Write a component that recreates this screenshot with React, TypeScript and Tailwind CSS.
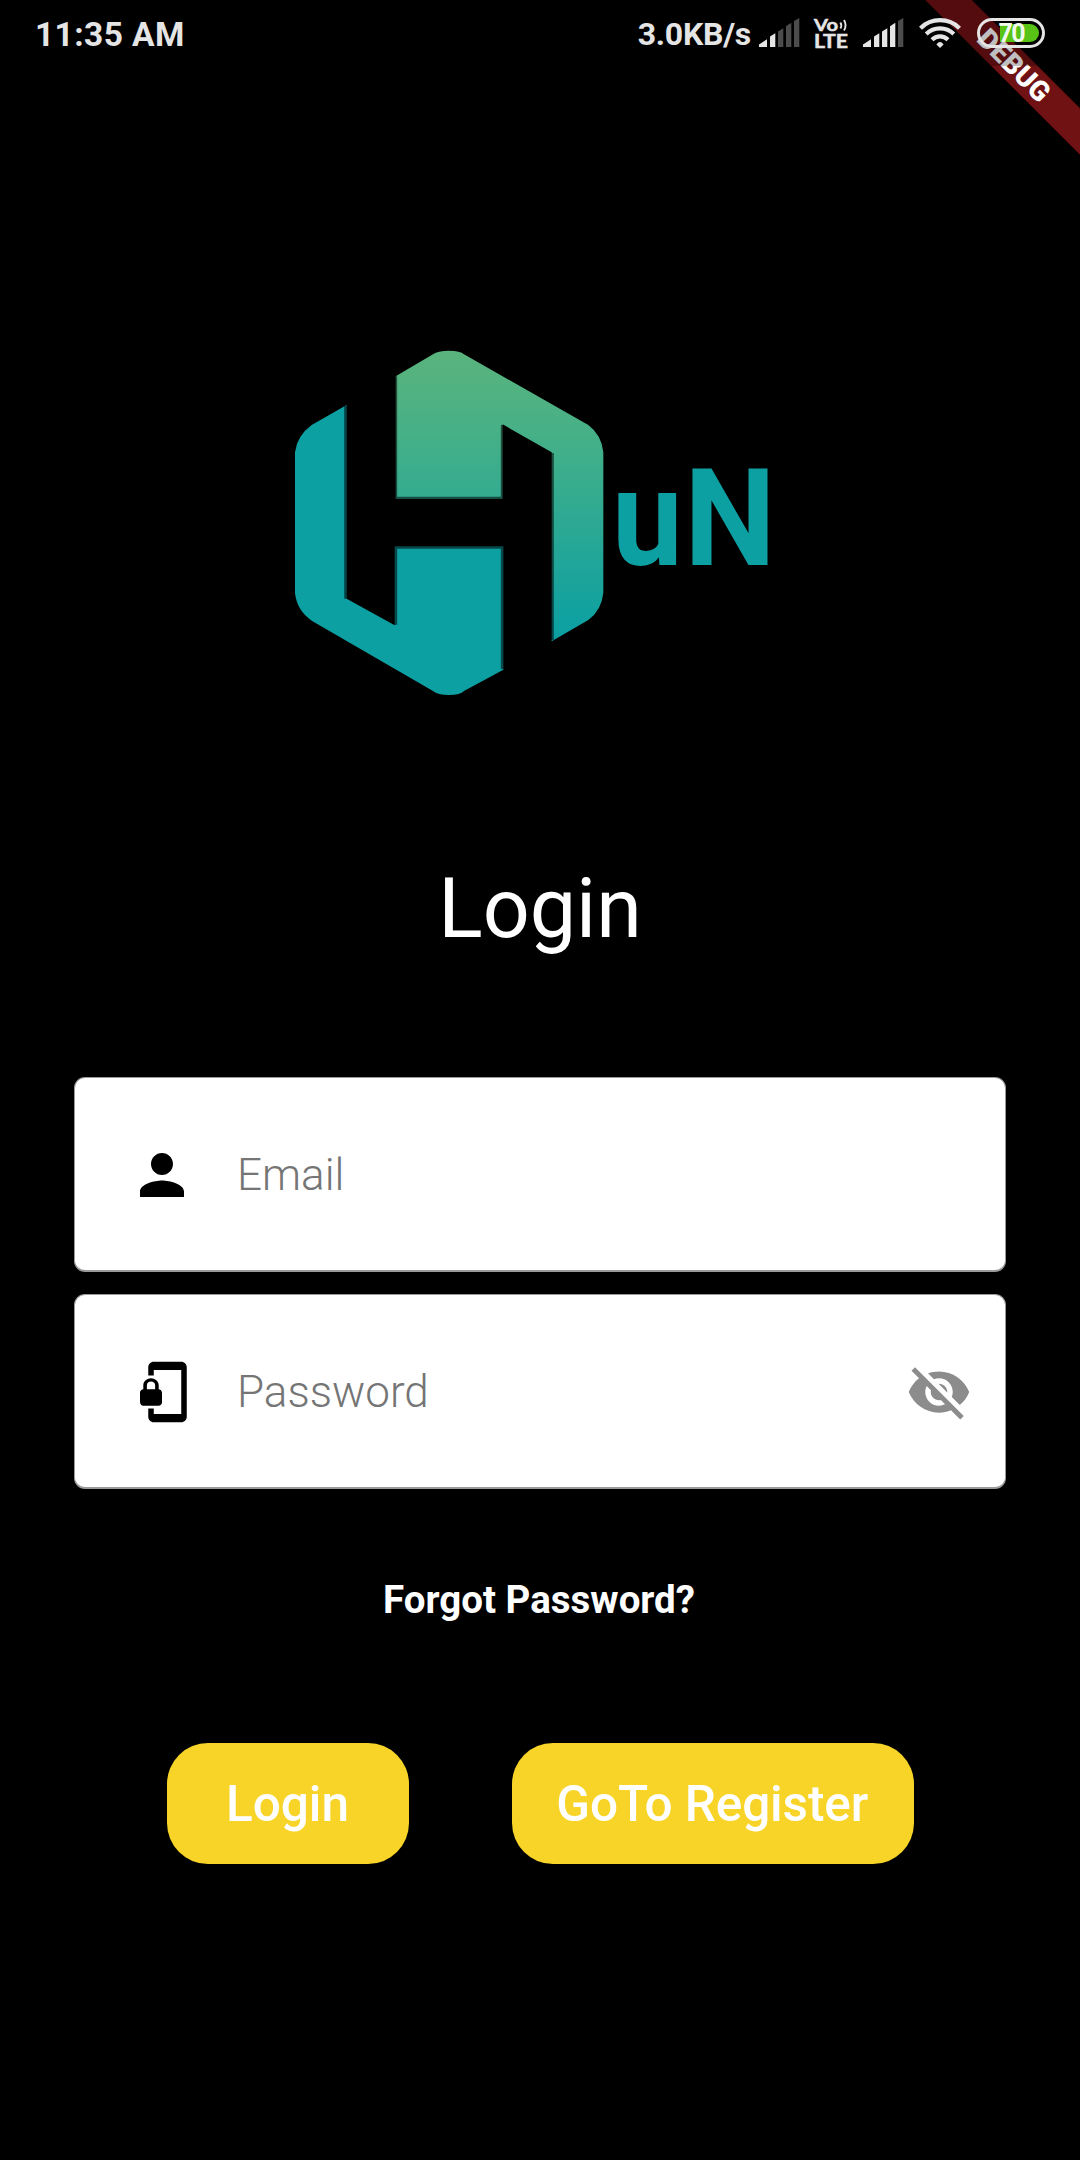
import type { ReactNode } from "react";

const BARS = [
  "M0 26.4 8 21.2V29H0z",
  "M11 18.4 16.3 15.2V29H11z",
  "M19 13.4 24.3 10.2V29H19z",
  "M27 8.2 32.3 4.8V29H27z",
  "M35 3 40.3 0V29H35z",
];

function Signal({ level }: { level: number }) {
  return (
    <svg width="41" height="29" viewBox="0 0 41 29" className="shrink-0">
      {BARS.map((d, i) => (
        <path key={d} d={d} fill={i < level ? "#e5e5e5" : "#4c4c4c"} />
      ))}
    </svg>
  );
}

function VoLte() {
  return (
    <svg
      width="34"
      height="32"
      viewBox="0 0 34 32"
      className="ml-[14px] shrink-0 overflow-visible"
      fill="#e5e5e5"
      fontFamily="Lato, sans-serif"
      fontWeight="700"
      stroke="#e5e5e5"
      strokeWidth="0.5"
    >
      <text x="0" y="12.6" fontSize="17" textLength="24" lengthAdjust="spacingAndGlyphs">
        Vo
      </text>
      <text x="0" y="29.8" fontSize="18" textLength="34" lengthAdjust="spacingAndGlyphs">
        LTE
      </text>
      <path
        d="M26.4 4.4q1.8 3 0 6M30 2q3.2 5.4 0 10.6"
        fill="none"
        strokeWidth="1.9"
      />
    </svg>
  );
}

function Wifi() {
  return (
    <svg width="42" height="30" viewBox="0 0 42 30" className="ml-[15px] shrink-0" fill="none" stroke="#e5e5e5" strokeWidth="4.2">
      <path d="M1.5 10.2Q9.5 2.2 21 2.2T40.5 10.2" />
      <path d="M7.2 16Q13 10.4 21 10.4T34.8 16" />
      <path d="M13 21.7Q16.5 18.3 21 18.3T29 21.7" />
      <path d="M17.4 26.4Q21 21.6 24.6 26.4L21 30z" fill="#e5e5e5" stroke="none" />
    </svg>
  );
}

function Battery() {
  return (
    <div className="relative ml-[16px] h-[30px] w-[68px] shrink-0 rounded-[15px] border-[3px] border-[#e5e5e5]">
      <div className="ml-[20px] mt-[3px] h-[18px] w-[39px] rounded-r-[9px] bg-[#58c314]" />
      <span className="absolute left-[18.5px] top-[-2.5px] text-[25px] font-bold leading-[29px] tracking-[-1.5px] text-[#f1f9ec]">
        70
      </span>
    </div>
  );
}

function StatusBar() {
  return (
    <header className="relative z-10 flex h-[66px] w-full items-start bg-black/25 pl-[35px] pr-[35px] text-[#e5e5e5]">
      <span className="mt-[15px] text-[33.5px] font-bold leading-[39px] tracking-[0.4px]">11:35 AM</span>
      <div className="ml-auto flex items-start">
        <span className="mr-[8px] mt-[15px] text-[32px] font-bold leading-[38px] tracking-[-0.25px]">3.0KB/s</span>
        <div className="flex items-start pt-[18px]">
          <Signal level={2} />
          <VoLte />
          <div className="w-[15px]" />
          <Signal level={4} />
          <Wifi />
          <Battery />
        </div>
      </div>
    </header>
  );
}

function Logo() {
  return (
    <svg width="510" height="380" viewBox="0 0 1530 1140" className="ml-[280px] mt-[264px] shrink-0">
      <defs>
        <linearGradient id="mint" gradientUnits="userSpaceOnUse" x1="0" y1="62" x2="0" y2="900">
          <stop offset="0" stopColor="#5ab37c" />
          <stop offset="0.3" stopColor="#46b087" />
          <stop offset="1" stopColor="#0da0a2" />
        </linearGradient>
      </defs>
      <path
        d="M347 139 459 73Q473 62 507 62T552 73L925 285Q965 315 970 367V788Q965 840 925 870L815 934V367L668 283V507H347z"
        fill="url(#mint)"
      />
      <path
        d="M200 225 95 285Q51 317 45 367V790Q51 842 95 872L459 1083Q473 1095 507 1095T552 1083L670 1019V649H344V886L200 806z"
        fill="#0da0a2"
      />
      <path
        d="M347 139V505H667V285M817 369V930M197 228V806M347 884V652H667V1017"
        fill="none"
        stroke="#000"
        strokeOpacity="0.55"
        strokeWidth="9"
      />
      <g fill="#0da0a2" fontFamily="Roboto, sans-serif" fontWeight="700" fontSize="405">
        <text transform="translate(996 706) scale(.935 1)">u</text>
        <text transform="translate(1213 706) scale(.96 1)">N</text>
      </g>
    </svg>
  );
}

function Icon({ d, className }: { d: string; className: string }) {
  return (
    <svg width="66" height="66" viewBox="0 0 24 24" fill="currentColor" className={className}>
      <path d={d} />
    </svg>
  );
}

const PERSON =
  "M12 12c2.21 0 4-1.79 4-4s-1.79-4-4-4-4 1.79-4 4 1.79 4 4 4zm0 2c-2.67 0-8 1.34-8 4v2h16v-2c0-2.66-5.33-4-8-4z";
const PHONE_LOCK =
  "M19 1H9c-1.1 0-2 .9-2 2v3h2V4h10v16H9v-2H7v3c0 1.1.9 2 2 2h10c1.1 0 2-.9 2-2V3c0-1.1-.9-2-2-2zm-8.2 10V9.5C10.8 8.1 9.4 7 8 7S5.2 8.1 5.2 9.5V11c-.6 0-1.2.6-1.2 1.2v3.5c0 .7.6 1.3 1.2 1.3h5.5c.7 0 1.3-.6 1.3-1.2v-3.5c0-.7-.6-1.3-1.2-1.3zm-1.3 0h-3V9.5c0-.8.7-1.3 1.5-1.3s1.5.5 1.5 1.3V11z";
const EYE_OFF =
  "M12 7c2.76 0 5 2.24 5 5 0 .65-.13 1.26-.36 1.83l2.92 2.92c1.51-1.26 2.7-2.89 3.43-4.75-1.73-4.39-6-7.5-11-7.5-1.4 0-2.74.25-3.98.7l2.16 2.16C10.74 7.13 11.35 7 12 7zM2 4.27l2.28 2.28.46.46C3.08 8.3 1.78 10.02 1 12c1.73 4.39 6 7.5 11 7.5 1.55 0 3.03-.3 4.38-.84l.42.42L19.73 22 21 20.73 3.27 3 2 4.27zM7.53 9.8l1.55 1.55c-.05.21-.08.43-.08.65 0 1.66 1.34 3 3 3 .22 0 .44-.03.65-.08l1.55 1.55c-.67.33-1.41.53-2.2.53-2.76 0-5-2.24-5-5 0-.79.2-1.53.53-2.2zm4.31-.78l3.15 3.15.02-.16c0-1.66-1.34-3-3-3l-.17.01z";

function Field({ icon, label, trailing }: { icon: string; label: string; trailing?: ReactNode }) {
  return (
    <div className="flex h-[195px] items-center rounded-[11px] border border-b-2 border-[#9a9a9a] bg-white pl-[54px] pr-[33px] pt-[2px]">
      <Icon d={icon} className="shrink-0 text-black" />
      <span className="ml-[42px] text-[44px] font-light leading-[52px] text-[#757575]">{label}</span>
      {trailing}
    </div>
  );
}

function PillButton({ children, className }: { children: ReactNode; className: string }) {
  return (
    <button
      className={`flex h-[121px] items-center justify-center rounded-[41px] bg-[#f8d428] pt-[1px] text-[49.5px] font-medium leading-[58px] text-white ${className}`}
    >
      {children}
    </button>
  );
}

export default function App() {
  return (
    <div className="relative flex h-[2160px] w-[1080px] flex-col overflow-hidden bg-black font-[Roboto,sans-serif] text-white">
      <div className="absolute left-[849px] top-[49px] flex h-[33px] w-[330px] rotate-45 items-center justify-center bg-[#701113] text-[28px] font-black leading-none">
        DEBUG
      </div>
      <StatusBar />
      <Logo />
      <h1 className="mt-[150px] text-center text-[82.5px] leading-[97px]">Login</h1>
      <div className="ml-[74px] mt-[120px] flex w-[932px] flex-col gap-[22px]">
        <Field icon={PERSON} label="Email" />
        <Field icon={PHONE_LOCK} label="Password" trailing={<Icon d={EYE_OFF} className="ml-auto shrink-0 text-[#8c8c8c]" />} />
      </div>
      <p className="mt-[88px] pr-[2px] text-center text-[38.5px] font-bold leading-[45px]">Forgot Password?</p>
      <div className="mt-[120.5px] flex gap-[103.5px] pl-[166.5px]">
        <PillButton className="w-[242px]">Login</PillButton>
        <PillButton className="w-[401.5px] pr-[1px] tracking-[-0.12px]">GoTo Register</PillButton>
      </div>
    </div>
  );
}
